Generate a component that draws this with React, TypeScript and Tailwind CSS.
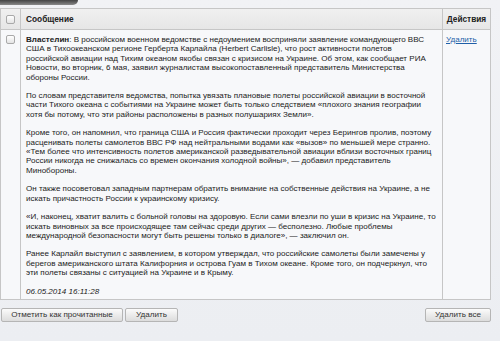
import React from "react";

const Box = () => (
  <span className="inline-block w-[9px] h-[9px] rounded-[2px] border border-[#a9a9a9] bg-gradient-to-b from-white to-[#e4e4e4]" />
);

const Btn = ({ children, cls = "" }: { children: React.ReactNode; cls?: string }) => (
  <button
    className={
      "h-[14px] rounded-[2px] border border-[#b5b5b5] bg-gradient-to-b from-[#fbfbfb] to-[#dcdcdc] text-[8.1px] leading-[12px] text-[#333] " +
      cls
    }
  >
    {children}
  </button>
);

const P = ({ lines, cls = "" }: { lines: React.ReactNode[]; cls?: string }) => (
  <p className={"mb-[9px] whitespace-nowrap " + cls}>
    {lines.map((l, i) => (
      <React.Fragment key={i}>
        {l}
        {i < lines.length - 1 && <br />}
      </React.Fragment>
    ))}
  </p>
);

export default function App() {
  return (
    <div
      className="w-[500px] h-[341px] overflow-hidden bg-gradient-to-b from-[#f1f2f5] to-[#eceef2] text-[#222]"
      style={{ fontFamily: '"Liberation Sans", Arial, sans-serif' }}
    >
      <div className="h-[5px] w-[78px] rounded-br-[14px] bg-gradient-to-b from-[#444] to-[#8a8a8a]" />
      <div className="mt-[3px] w-[491px] border border-[#c6c6c6] bg-[#f7f8fa]">
        <div className="flex h-[21px] bg-gradient-to-b from-[#f0f0f0] to-[#e6e6e6] border-b border-[#c6c6c6]">
          <div className="w-[20px] border-r border-[#c6c6c6] flex items-center justify-center">
            <Box />
          </div>
          <div className="flex-1 flex items-center pl-[5px] font-bold text-[8.3px]">Сообщение</div>
          <div className="w-[48px] border-l border-[#c6c6c6] flex items-center justify-center font-bold text-[8.3px]">
            Действия
          </div>
        </div>
        <div className="flex h-[269px]">
          <div className="w-[20px] border-r border-[#c6c6c6] flex justify-center pt-[5px]">
            <Box />
          </div>
          <div className="flex-1 pl-[5px] pt-[5px] text-[8.05px] leading-[9.4px] overflow-hidden">
            <P
              lines={[
                <>
                  <b>Властелин</b>: В российском военном ведомстве с недоумением восприняли заявление командующего ВВС
                </>,
                "США в Тихоокеанском регионе Герберта Карлайла (Herbert Carlisle), что рост активности полетов",
                "российской авиации над Тихим океаном якобы связан с кризисом на Украине. Об этом, как сообщает РИА",
                "Новости, во вторник, 6 мая, заявил журналистам высокопоставленный представитель Министерства",
                "обороны России.",
              ]}
            />
            <P
              lines={[
                "По словам представителя ведомства, попытка увязать плановые полеты российской авиации в восточной",
                "части Тихого океана с событиями на Украине может быть только следствием «плохого знания географии",
                "хотя бы потому, что эти районы расположены в разных полушариях Земли».",
              ]}
            />
            <P
              lines={[
                "Кроме того, он напомнил, что граница США и Россия фактически проходит через Берингов пролив, поэтому",
                "расценивать полеты самолетов ВВС РФ над нейтральными водами как «вызов» по меньшей мере странно.",
                "«Тем более что интенсивность полетов американской разведывательной авиации вблизи восточных границ",
                "России никогда не снижалась со времен окончания холодной войны», — добавил представитель",
                "Минобороны.",
              ]}
            />
            <P
              lines={[
                "Он также посоветовал западным партнерам обратить внимание на собственные действия на Украине, а не",
                "искать причастность России к украинскому кризису.",
              ]}
            />
            <P
              lines={[
                "«И, наконец, хватит валить с больной головы на здоровую. Если сами влезли по уши в кризис на Украине, то",
                "искать виновных за все происходящее там сейчас среди других — бесполезно. Любые проблемы",
                "международной безопасности могут быть решены только в диалоге», — заключил он.",
              ]}
            />
            <P
              lines={[
                "Ранее Карлайл выступил с заявлением, в котором утверждал, что российские самолеты были замечены у",
                "берегов американского штата Калифорния и острова Гуам в Тихом океане. Кроме того, он подчеркнул, что",
                "эти полеты связаны с ситуацией на Украине и в Крыму.",
              ]}
            />
            <p className="italic">06.05.2014 16:11:28</p>
          </div>
          <div className="w-[48px] border-l border-[#c6c6c6] pl-[3px] pt-[5px] text-[8.05px] leading-[9.4px]">
            <a href="#" className="text-[#1f5fa8] underline">
              Удалить
            </a>
          </div>
        </div>
      </div>
      <div className="mt-[8px] flex w-[491px] items-center">
        <Btn cls="w-[122px] ml-[1px]">Отметить как прочитанные</Btn>
        <Btn cls="w-[53px] ml-[2px]">Удалить</Btn>
        <Btn cls="w-[66px] ml-auto">Удалить все</Btn>
      </div>
    </div>
  );
}
